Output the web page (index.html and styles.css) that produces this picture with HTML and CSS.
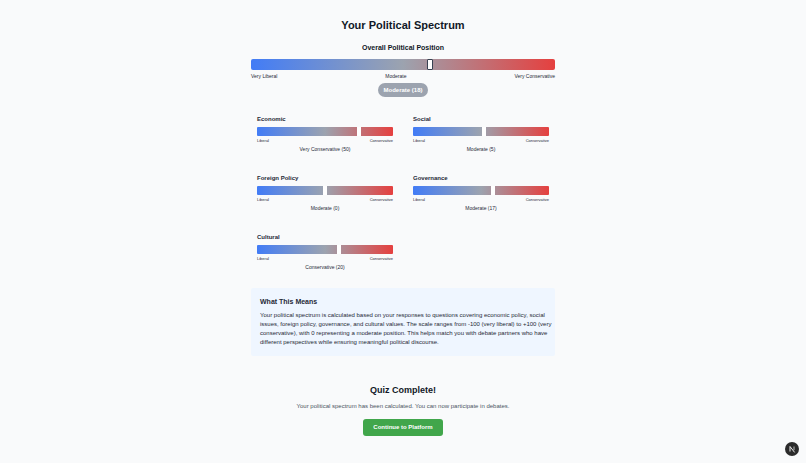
FILE: index.html
```html
<!doctype html>
<html lang="en">
  <head>
    <meta charset="UTF-8" />
    <meta name="viewport" content="width=device-width, initial-scale=1.0" />
    <title>Your Political Spectrum</title>
    <link rel="stylesheet" href="styles.css">
  </head>
  <body>
    <main class="results">
      <h1>Your Political Spectrum</h1>

      <section class="overall">
        <h2>Overall Political Position</h2>
        <div class="bar bar-large">
          <div class="marker" style="left: 59%"></div>
        </div>
        <div class="scale">
          <span>Very Liberal</span>
          <span>Moderate</span>
          <span>Very Conservative</span>
        </div>
        <span class="badge">Moderate (18)</span>
      </section>

      <section class="categories">
        <div class="category">
          <h3>Economic</h3>
          <div class="bar">
            <div class="marker" style="left: 75%"></div>
          </div>
          <div class="scale"><span>Liberal</span><span>Conservative</span></div>
          <p class="value">Very Conservative (50)</p>
        </div>
        <div class="category">
          <h3>Social</h3>
          <div class="bar">
            <div class="marker" style="left: 52.5%"></div>
          </div>
          <div class="scale"><span>Liberal</span><span>Conservative</span></div>
          <p class="value">Moderate (5)</p>
        </div>
        <div class="category">
          <h3>Foreign Policy</h3>
          <div class="bar">
            <div class="marker" style="left: 50%"></div>
          </div>
          <div class="scale"><span>Liberal</span><span>Conservative</span></div>
          <p class="value">Moderate (0)</p>
        </div>
        <div class="category">
          <h3>Governance</h3>
          <div class="bar">
            <div class="marker" style="left: 58.5%"></div>
          </div>
          <div class="scale"><span>Liberal</span><span>Conservative</span></div>
          <p class="value">Moderate (17)</p>
        </div>
        <div class="category">
          <h3>Cultural</h3>
          <div class="bar">
            <div class="marker" style="left: 60%"></div>
          </div>
          <div class="scale"><span>Liberal</span><span>Conservative</span></div>
          <p class="value">Conservative (20)</p>
        </div>
      </section>

      <section class="explanation">
        <h3>What This Means</h3>
        <p>
          Your political spectrum is calculated based on your responses to
          questions covering economic policy, social issues, foreign policy,
          governance, and cultural values. The scale ranges from -100 (very
          liberal) to +100 (very conservative), with 0 representing a moderate
          position. This helps match you with debate partners who have different
          perspectives while ensuring meaningful political discourse.
        </p>
      </section>

      <section class="complete">
        <h2>Quiz Complete!</h2>
        <p>Your political spectrum has been calculated. You can now participate in debates.</p>
        <button type="button">Continue to Platform</button>
      </section>
    </main>

    <button class="dev-button" type="button" aria-label="Open developer tools">
      <svg viewBox="0 0 14 14" fill="none" aria-hidden="true">
        <path d="M5 9.5V4.5L9.6 10.4" stroke="#fff" stroke-width="0.9" />
        <path d="M9 4.5V8.2" stroke="#ccc" stroke-width="0.9" />
      </svg>
    </button>
  </body>
</html>
```

FILE: styles.css
```css
* {
  box-sizing: border-box;
}
body {
  margin: 0;
  background-color: #f9fafb;
  color: #1f2937;
  font-family: "Liberation Sans", Arial, sans-serif;
  font-size: 6px;
  line-height: 9px;
}
h1,
h2,
h3,
p {
  margin: 0;
}
h1,
h2 {
  color: #111827;
}
.results {
  max-width: 304px;
  margin: 0 auto;
  padding: 18px 0;
}
h1 {
  margin-bottom: 11px;
  font-size: 11px;
  line-height: 14px;
  text-align: center;
}
.overall {
  margin-bottom: 18px;
  text-align: center;
}
.overall h2 {
  margin-bottom: 6px;
  font-size: 7px;
  line-height: 10px;
}
.bar {
  position: relative;
  height: 9px;
  border-radius: 1px;
  background: linear-gradient(to right, #427cf6, #9ca3af, #e5403f);
}
.bar-large {
  height: 11px;
  border-radius: 2px;
}
.marker {
  position: absolute;
  top: 0;
  bottom: 0;
  width: 4px;
  background-color: #fff;
  transform: translateX(-50%);
}
.bar-large .marker {
  width: 6px;
  border: 1px solid #374151;
  border-radius: 1px;
}
.scale {
  display: flex;
  justify-content: space-between;
  font-size: 4px;
  line-height: 5px;
}
.overall .scale {
  margin: 3px 0;
  font-size: 5px;
  line-height: 7px;
}
.badge {
  display: inline-block;
  padding: 3px 5px;
  border-radius: 8px;
  background-color: #9ca3af;
  color: #fff;
  font-weight: bold;
  line-height: 8px;
}
.categories {
  display: grid;
  grid-template-columns: 1fr 1fr;
  gap: 14px 8px;
  margin-bottom: 10px;
}
.category {
  padding: 0 6px 6px;
}
.category h3 {
  margin-bottom: 3px;
  font-size: 6px;
  line-height: 9px;
}
.category .scale {
  margin: 2px 0;
}
.value {
  font-size: 5px;
  text-align: center;
}
.explanation {
  padding: 9px 2px 9px 9px;
  margin-bottom: 28px;
  border-radius: 2px;
  background-color: #eff6ff;
}
.explanation h3 {
  margin-bottom: 5px;
  font-size: 7px;
}
.complete {
  text-align: center;
}
.complete h2 {
  margin-bottom: 6px;
  font-size: 9px;
  line-height: 12px;
}
.complete p {
  margin-bottom: 8px;
  color: #4b5563;
}
.complete button {
  padding: 4px 10px;
  border: 0;
  border-radius: 3px;
  background-color: #41a64b;
  color: #fff;
  font: bold 6px/9px "Liberation Sans", Arial, sans-serif;
}
.dev-button {
  position: fixed;
  right: 7px;
  bottom: 7px;
  width: 14px;
  height: 14px;
  padding: 0;
  border: 0;
  border-radius: 50%;
  background-color: #2b2b2b;
}
.dev-button svg {
  display: block;
}
```
